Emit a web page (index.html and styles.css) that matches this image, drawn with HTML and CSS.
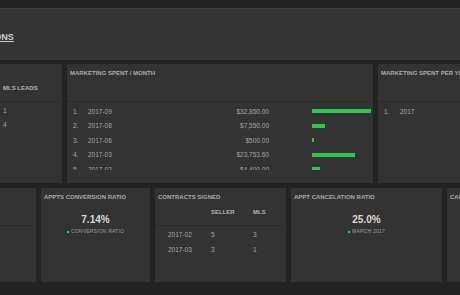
FILE: index.html
```html
<!DOCTYPE html>
<html>
<head>
    <title>Operations Dashboard</title>
    <link rel="stylesheet" href="styles.css">
</head>
<body>
    <div class="dash">
        <div class="page-head">
            <a href="#">OPERATIONS</a>
        </div>

        <div class="row row-top">
            <div class="panel">
                <div class="panel-title"></div>
                <div class="thead cols-leads">
                    <span></span>
                    <span>MLS LEADS</span>
                </div>
                <div class="tbody">
                    <div class="tr cols-leads"><span></span><span>1</span></div>
                    <div class="tr cols-leads"><span></span><span>4</span></div>
                </div>
            </div>

            <div class="panel">
                <div class="panel-title">MARKETING SPENT / MONTH</div>
                <div class="thead"></div>
                <div class="list">
                    <div class="li"><span>1.</span><span>2017-09</span><span class="amount">$32,850.00</span><span class="bar" style="width: 59px"></span></div>
                    <div class="li"><span>2.</span><span>2017-08</span><span class="amount">$7,550.00</span><span class="bar" style="width: 13px"></span></div>
                    <div class="li"><span>3.</span><span>2017-06</span><span class="amount">$500.00</span><span class="bar" style="width: 2px"></span></div>
                    <div class="li"><span>4.</span><span>2017-03</span><span class="amount">$23,753.60</span><span class="bar" style="width: 43px"></span></div>
                    <div class="li"><span>5.</span><span>2017-02</span><span class="amount">$4,400.00</span><span class="bar" style="width: 8px"></span></div>
                </div>
            </div>

            <div class="panel">
                <div class="panel-title">MARKETING SPENT PER YEAR</div>
                <div class="thead"></div>
                <div class="list">
                    <div class="li li-year"><span>1.</span><span>2017</span><span class="amount">$69,053.60</span><span class="bar" style="width: 59px"></span></div>
                </div>
            </div>
        </div>

        <div class="row row-bottom">
            <div class="panel">
                <div class="panel-title"></div>
                <div class="thead"></div>
            </div>

            <div class="panel">
                <div class="panel-title">APPTS CONVERSION RATIO</div>
                <div class="stat">
                    <div class="stat-value">7.14%</div>
                    <div class="stat-legend"><span class="dot"></span>CONVERSION RATIO</div>
                </div>
            </div>

            <div class="panel">
                <div class="panel-title">CONTRACTS SIGNED</div>
                <div class="thead cols-contracts">
                    <span></span>
                    <span>SELLER</span>
                    <span>MLS</span>
                </div>
                <div class="tbody">
                    <div class="tr tr-contracts cols-contracts"><span>2017-02</span><span>5</span><span>3</span></div>
                    <div class="tr tr-contracts cols-contracts"><span>2017-03</span><span>3</span><span>1</span></div>
                </div>
            </div>

            <div class="panel">
                <div class="panel-title">APPT CANCELATION RATIO</div>
                <div class="stat">
                    <div class="stat-value">25.0%</div>
                    <div class="stat-legend"><span class="dot"></span>MARCH 2017</div>
                </div>
            </div>

            <div class="panel">
                <div class="panel-title">CANCELED CONTRACTS</div>
            </div>
        </div>
    </div>
</body>
</html>
```

FILE: styles.css
```css
body {
    margin: 0;
    background-color: #232323;
    font-family: "Liberation Sans", Arial, sans-serif;
    overflow: hidden;
}
.dash {
    margin-left: -60px;
    width: 660px;
    padding-top: 8px;
}
.page-head {
    height: 52px;
    box-sizing: border-box;
    padding: 17px 0 0 15px;
    background-color: #353535;
    border-top: 1px solid #3d3d3d;
}
.page-head a {
    font-size: 9px;
    font-weight: bold;
    line-height: 10px;
    color: #cccccc;
    text-decoration: underline;
}
.row {
    display: grid;
    column-gap: 5px;
}
.row-top {
    grid-template-columns: 122px 306px 220px;
    height: 119px;
    margin-top: 4px;
}
.row-bottom {
    grid-template-columns: 96px 109px 131px 151px 150px;
    height: 94px;
    margin-top: 5px;
}
.panel {
    background-color: #333333;
    overflow: hidden;
}
.panel-title {
    height: 18px;
    box-sizing: border-box;
    padding: 5px 3px 0;
    font-size: 6px;
    font-weight: bold;
    line-height: 8px;
    color: #ababab;
    white-space: nowrap;
}
.thead {
    height: 20px;
    box-sizing: border-box;
    padding-top: 2px;
    margin-right: 3px;
    border-bottom: 1px solid #2a2a2a;
    font-size: 6px;
    font-weight: bold;
    line-height: 8px;
    color: #b5b5b5;
    white-space: nowrap;
}
.cols-leads {
    display: grid;
    grid-template-columns: 63px 1fr;
}
.cols-contracts {
    display: grid;
    grid-template-columns: 43px 42px 1fr;
    padding-left: 13px;
}
.tbody {
    padding-top: 2px;
}
.tr {
    height: 14px;
    font-size: 6.5px;
    line-height: 14px;
    color: #a5a5a5;
}
.tr-contracts {
    height: 15px;
    line-height: 15px;
}
.tbody .tr-contracts:first-child {
    margin-top: -1px;
}
.list {
    height: 68px;
    box-sizing: border-box;
    padding-top: 2px;
    overflow: hidden;
}
.li {
    display: grid;
    grid-template-columns: 15px 1fr auto 59px;
    align-items: center;
    height: 14.5px;
    padding: 0 2px 0 6px;
    font-size: 6.5px;
    color: #a5a5a5;
    white-space: nowrap;
}
.li-year {
    grid-template-columns: 16px 1fr auto 59px;
}
.amount {
    margin-right: 43px;
    text-align: right;
}
.bar {
    height: 4px;
    background-color: #2bc94f;
}
.stat {
    margin-top: 8px;
    text-align: center;
}
.stat-value {
    font-size: 10px;
    font-weight: bold;
    line-height: 12px;
    color: #d9d9d9;
}
.stat-legend {
    margin-top: 2px;
    font-size: 5px;
    line-height: 6px;
    letter-spacing: 0.2px;
    color: #9c9c9c;
}
.dot {
    display: inline-block;
    width: 2px;
    height: 2px;
    margin-right: 2px;
    vertical-align: middle;
    background-color: #2bc94f;
}
```
